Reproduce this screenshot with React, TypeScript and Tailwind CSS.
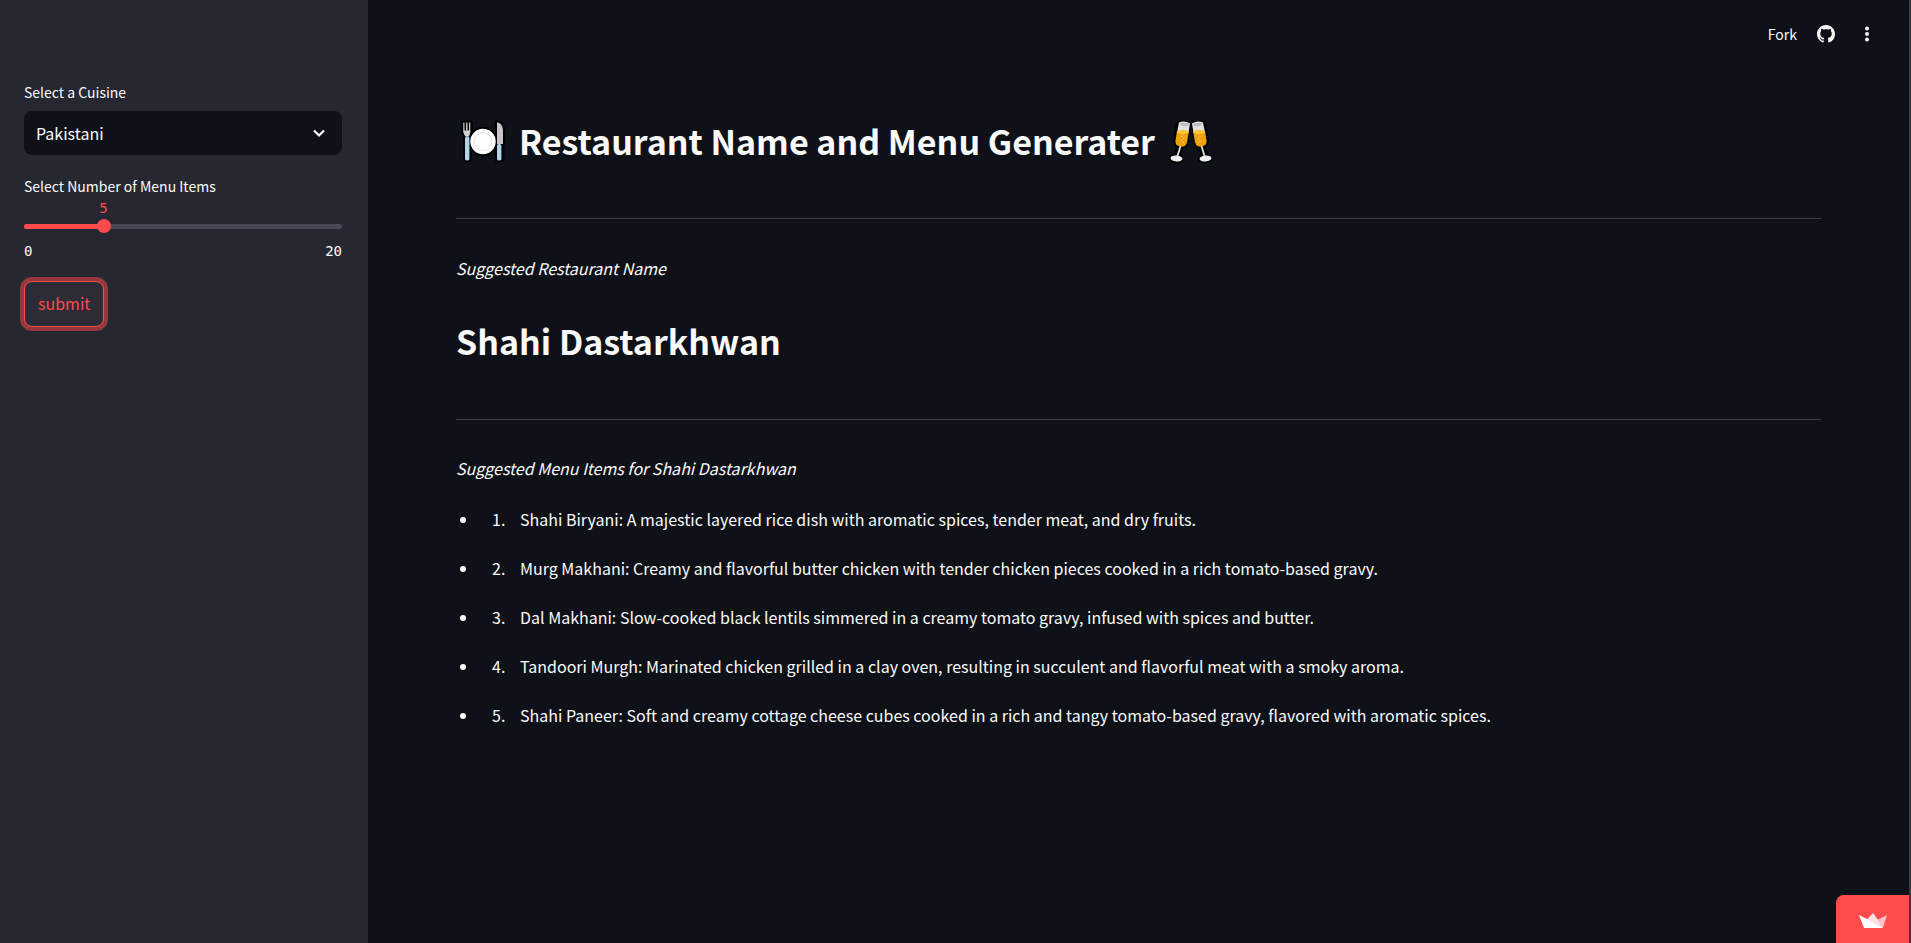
import { useState } from "react";

const menuItems = [
  "Shahi Biryani: A majestic layered rice dish with aromatic spices, tender meat, and dry fruits.",
  "Murg Makhani: Creamy and flavorful butter chicken with tender chicken pieces cooked in a rich tomato-based gravy.",
  "Dal Makhani: Slow-cooked black lentils simmered in a creamy tomato gravy, infused with spices and butter.",
  "Tandoori Murgh: Marinated chicken grilled in a clay oven, resulting in succulent and flavorful meat with a smoky aroma.",
  "Shahi Paneer: Soft and creamy cottage cheese cubes cooked in a rich and tangy tomato-based gravy, flavored with aromatic spices.",
];

function DinnerPlate() {
  return (
    <svg
      role="img"
      aria-label="Fork and knife with plate"
      viewBox="1 -1 44 44"
      className="h-11 w-11 shrink-0 overflow-visible"
    >
      <g stroke="#000" strokeWidth="4.500" strokeLinejoin="round" strokeLinecap="round" fill="#000">
        <path d="M3.500 2.500h7v10l-1 4v23h-4v-23l-2-4z" />
        <path d="M37 2.500c4 0 6 4 6 9v11h-1v17h-5z" />
        <circle cx="23" cy="21.500" r="12.500" />
      </g>
      <path d="M3.300 2.500h1.200v8h1.600v-8h1.400v8h1.600v-8h1.200v10l-1.300 4H5.200l-1.900-4z" fill="#d3d0d4" />
      <rect x="5" y="16.500" width="4.400" height="24" rx="1.800" fill="#add5ee" />
      <path d="M37 2.500c4 0 6 4 6 9v12.500h-6z" fill="#c9c4c9" />
      <rect x="37" y="24" width="4.400" height="16.500" rx="1.800" fill="#add5ee" />
      <circle cx="23" cy="21.500" r="12.700" fill="#fff" />
      <circle cx="23" cy="21.500" r="9" fill="none" stroke="#e3e1e4" strokeWidth="1" />
    </svg>
  );
}

function Glass() {
  return (
    <g>
      <path d="M10 3.500c4-2 8-1 11 1l-1.500 9H8z" fill="#e4e3e4" />
      <ellipse cx="15.500" cy="5.500" rx="4.500" ry="1.800" transform="rotate(7 15.500 5.500)" fill="#bfbdc0" />
      <path d="M8 12h12l-2 11.500c-1 3.500-3.500 4.500-6.500 4-3.500-.5-5.500-2.500-5-6z" fill="#eda20b" />
      <ellipse cx="13.900" cy="13" rx="6" ry="2.200" fill="#ffc33d" />
      <path d="M13 17v1m1.500 1v1M13 21v1m1.500 1v1" stroke="#ffd36e" strokeWidth="1.200" />
      <path d="M11.500 27l-3.300 11" stroke="#dedde0" strokeWidth="1.800" />
      <ellipse cx="7.500" cy="39.500" rx="6" ry="3" transform="rotate(5 7.500 39.500)" fill="#efeef0" />
    </g>
  );
}

function ClinkingGlasses() {
  return (
    <svg
      role="img"
      aria-label="Clinking glasses"
      viewBox="0 0 44 44"
      className="h-11 w-11 shrink-0 overflow-visible"
    >
      <g fill="#000" stroke="#000" strokeWidth="4" strokeLinejoin="round">
        <path d="M9 3.500l11 1-3 21-4 2-3 10 3 3-4 2-6-1-1-3 4-1 3-10-3-5z" />
        <path d="M35 3.500l-11 1 3 21 4 2 3 10-3 3 4 2 6-1 1-3-4-1-3-10 3-5z" />
      </g>
      <Glass />
      <g transform="matrix(-1 0 0 1 44 0)">
        <Glass />
      </g>
    </svg>
  );
}

export default function App() {
  const [count, setCount] = useState(5);
  const percent = (count / 20) * 100;

  return (
    <div className="flex min-h-screen border-r-2 border-[#3a3a3c] bg-[#0e1117] font-['Noto_Sans_CJK_SC',sans-serif] text-base text-[#fafafa]">
      <aside className="w-[368px] shrink-0 bg-[#262730] pt-20 pr-[26px] pl-6">
        <label htmlFor="cuisine" className="block text-sm leading-6">
          Select a Cuisine
        </label>
        <div className="relative mt-[7px]">
          <select
            id="cuisine"
            defaultValue="Pakistani"
            className="block h-11 w-full appearance-none rounded-lg bg-[#0e1117] px-3 outline-none"
          >
            <option>Pakistani</option>
            <option>Indian</option>
            <option>Italian</option>
          </select>
          <svg
            viewBox="0 0 14 14"
            aria-hidden="true"
            className="pointer-events-none absolute top-[15px] right-4 h-3.5 w-3.5"
            fill="none"
            stroke="currentColor"
            strokeWidth="2.200"
          >
            <path d="M2 4.500l5 5 5-5" />
          </svg>
        </div>

        <label htmlFor="count" className="mt-[19px] block text-sm leading-6">
          Select Number of Menu Items
        </label>
        <div className="font-['DejaVu_Sans_Mono',monospace] text-sm">
          <div className="relative h-5">
            <output
              htmlFor="count"
              className="absolute -translate-x-1/2 leading-5 text-[#ff4b4b]"
              style={{ left: `${percent}%` }}
            >
              {count}
            </output>
          </div>
          <div className="relative flex h-4 items-center">
            <div className="h-[5px] w-full overflow-hidden rounded-full bg-[#484954]">
              <div className="h-full bg-[#ff4b4b]" style={{ width: `${percent}%` }} />
            </div>
            <span
              className="absolute h-3.5 w-3.5 -translate-x-1/2 rounded-full bg-[#ff4b4b]"
              style={{ left: `${percent}%` }}
            />
            <input
              id="count"
              type="range"
              min={0}
              max={20}
              value={count}
              onChange={(e) => setCount(Number(e.target.value))}
              className="absolute inset-0 w-full cursor-pointer opacity-0"
            />
          </div>
          <div className="mt-[5px] flex justify-between leading-6">
            <span>0</span>
            <span>20</span>
          </div>
        </div>

        <button
          type="button"
          className="mt-[18px] h-[46px] rounded-lg border border-[#ff4b4b] bg-[#2b2c36] px-[13px] pb-0.5 text-[#ff4b4b] ring-4 ring-[#ff4b4b]/50"
        >
          submit
        </button>
      </aside>

      <div className="flex min-w-0 flex-1 flex-col">
        <header className="flex h-[68px] items-center justify-end gap-5 pr-[30px]">
          <a href="#fork" className="text-sm">
            Fork
          </a>
          <a href="#source" aria-label="View source on GitHub">
            <svg viewBox="0 0 16 16" className="h-[18px] w-[18px]" fill="currentColor" aria-hidden="true">
              <path d="M8 0C3.580 0 0 3.580 0 8c0 3.540 2.290 6.530 5.470 7.590.4.070.55-.17.55-.38 0-.19-.01-.82-.01-1.490-2.010.37-2.530-.49-2.690-.94-.09-.23-.48-.94-.82-1.130-.28-.15-.68-.52-.01-.53.63-.01 1.080.58 1.230.82.72 1.210 1.870.87 2.330.66.07-.52.28-.87.51-1.070-1.780-.2-3.640-.89-3.640-3.950 0-.87.31-1.590.82-2.150-.08-.2-.36-1.020.08-2.120 0 0 .67-.21 2.200.82.64-.18 1.320-.27 2-.27s1.360.09 2 .27c1.530-1.040 2.200-.82 2.200-.82.44 1.100.16 1.920.08 2.120.51.56.82 1.270.82 2.150 0 3.070-1.870 3.750-3.650 3.950.29.25.54.73.54 1.480 0 1.070-.01 1.930-.01 2.200 0 .21.15.46.55.38A8.010 8.010 0 0 0 16 8c0-4.420-3.580-8-8-8z" />
            </svg>
          </a>
          <button type="button" aria-label="Main menu" className="flex w-6 justify-center">
            <svg viewBox="0 0 4 16" className="h-4 w-1" fill="currentColor" aria-hidden="true">
              <circle cx="2" cy="2.500" r="2" />
              <circle cx="2" cy="8" r="2" />
              <circle cx="2" cy="13.500" r="2" />
            </svg>
          </button>
        </header>

        <main className="flex-1 px-[88px] pt-[43px]">
          <h1 className="flex items-center gap-3.5 pl-[5px] text-[34px] leading-[60px] font-bold">
            <DinnerPlate />
            <span>Restaurant Name and Menu Generater</span>
            <ClinkingGlasses />
          </h1>
          <hr className="mt-[47px] border-[#3d3f44]" />
          <p className="mt-[37px] leading-6 italic">Suggested Restaurant Name</p>
          <h2 className="mt-[31px] text-[34px] leading-[60px] font-bold">Shahi Dastarkhwan</h2>
          <hr className="mt-12 border-[#3d3f44]" />
          <p className="mt-9 leading-6 italic">Suggested Menu Items for Shahi Dastarkhwan</p>
          <ul className="mt-[27px] flex flex-col gap-[25px]">
            {menuItems.map((item, i) => (
              <li key={item} className="flex items-center leading-6">
                <span className="mt-0.5 mr-[26px] ml-1 h-1.5 w-1.5 shrink-0 rounded-full bg-[#fafafa]" />
                <span className="w-7 shrink-0">{i + 1}.</span>
                <span>{item}</span>
              </li>
            ))}
          </ul>
        </main>
      </div>

      <a
        href="#host"
        aria-label="Hosted with Streamlit"
        className="fixed right-0.5 bottom-0 flex h-12 w-[73px] items-center justify-center rounded-tl-lg bg-[#ff4b4b] pt-1"
      >
        <svg viewBox="0 0 28 16" className="h-4 w-7" aria-hidden="true">
          <path d="M14 0l6 8 4 7L8 6.500z" fill="#ffe0e4" />
          <path d="M28 2l-4 13-5-8.500z" fill="#ffc0c8" />
          <path d="M0 2l9 4.500L24 15H5z" fill="#fff" />
        </svg>
      </a>
    </div>
  );
}
